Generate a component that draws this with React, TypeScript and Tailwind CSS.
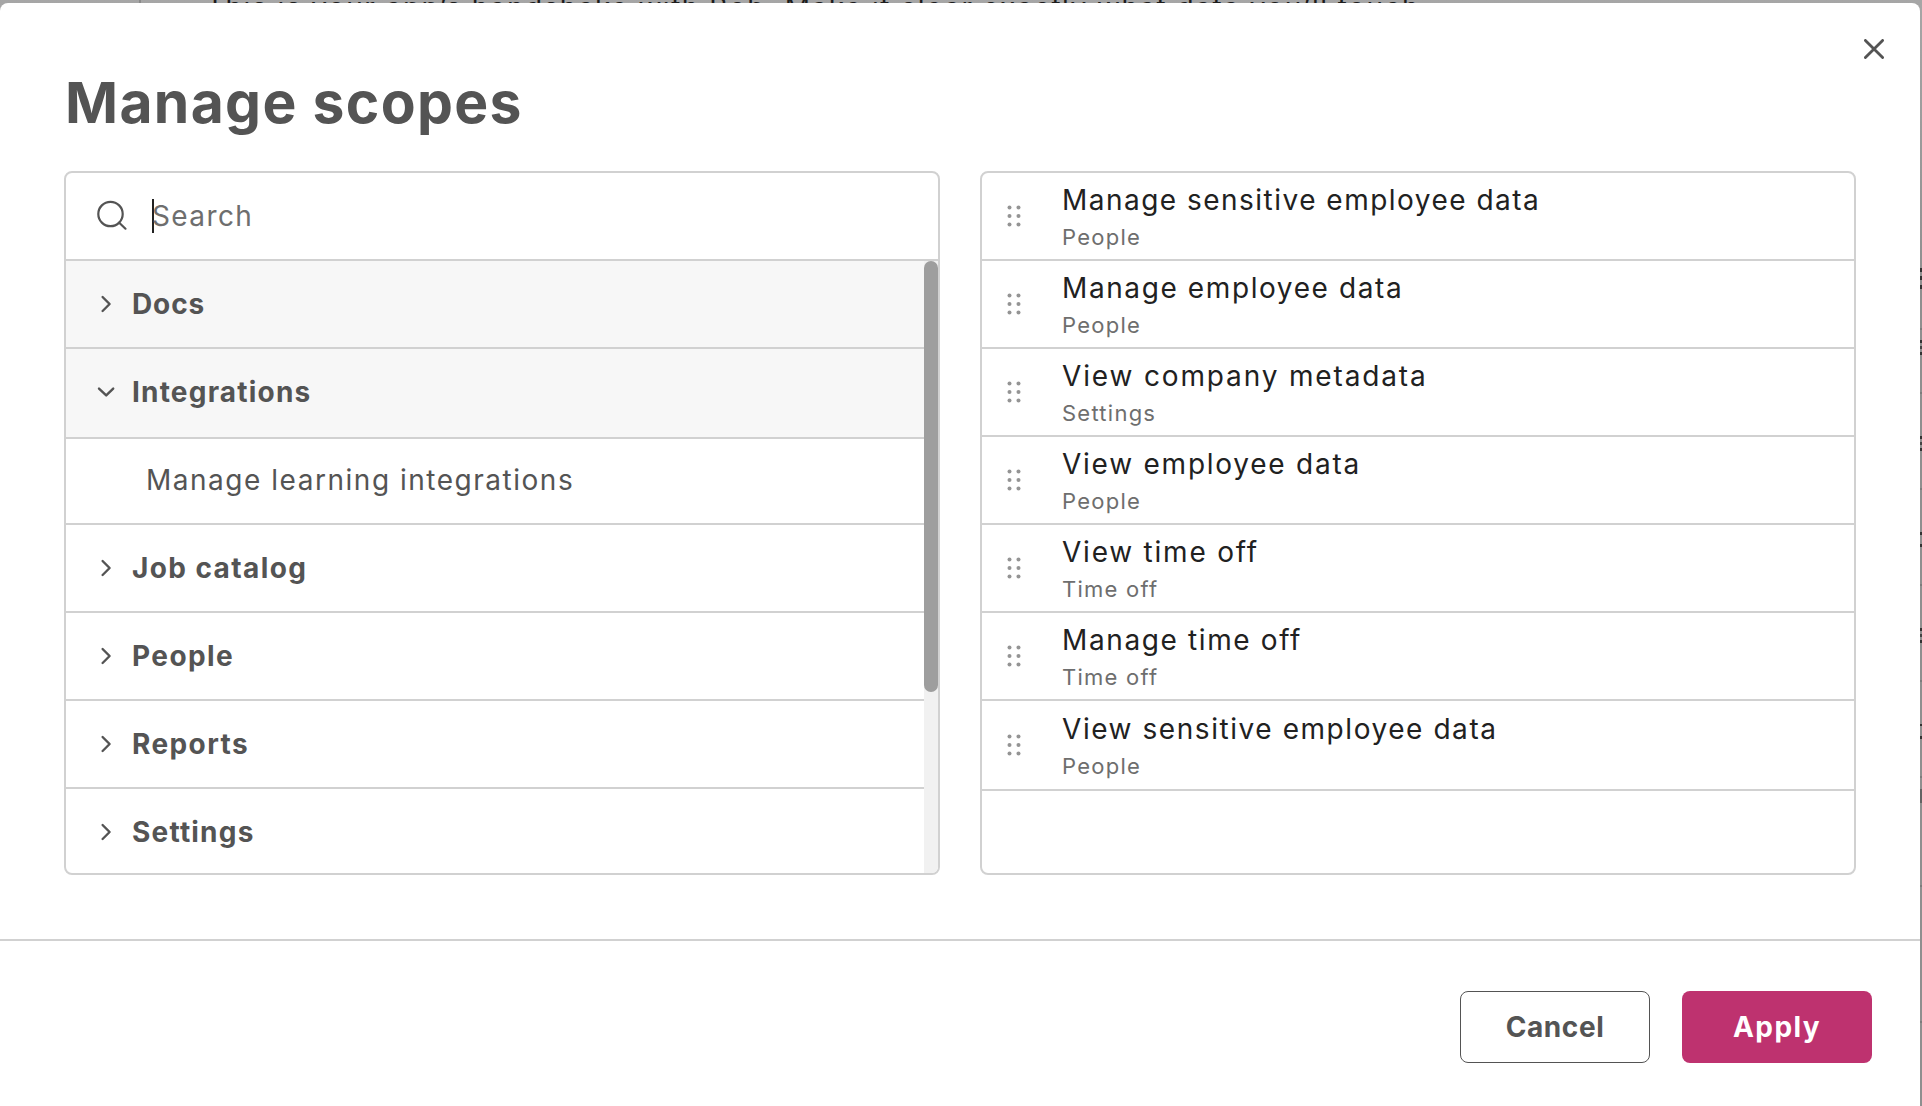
import { useState } from "react";

interface Group {
  name: string;
  tracking: string;
  open?: boolean;
  shaded?: boolean;
  items?: string[];
}

interface Scope {
  name: string;
  group: string;
  tracking: string;
}

const groups: Group[] = [
  { name: "Docs", tracking: "tracking-[0.9px]", shaded: true },
  {
    name: "Integrations",
    tracking: "tracking-[1.2px]",
    shaded: true,
    open: true,
    items: ["Manage learning integrations"],
  },
  { name: "Job catalog", tracking: "tracking-[1.4px]" },
  { name: "People", tracking: "tracking-[1.4px]" },
  { name: "Reports", tracking: "tracking-[1.4px]" },
  { name: "Settings", tracking: "tracking-[1.2px]" },
];

const scopes: Scope[] = [
  { name: "Manage sensitive employee data", group: "People", tracking: "tracking-[1.48px]" },
  { name: "Manage employee data", group: "People", tracking: "tracking-[1.6px]" },
  { name: "View company metadata", group: "Settings", tracking: "tracking-[1.85px]" },
  { name: "View employee data", group: "People", tracking: "tracking-[1.76px]" },
  { name: "View time off", group: "Time off", tracking: "tracking-[1.78px]" },
  { name: "Manage time off", group: "Time off", tracking: "tracking-[1.62px]" },
  { name: "View sensitive employee data", group: "People", tracking: "tracking-[1.56px]" },
];

// slivers of the page that stick out to the right of the modal
const slivers = [
  "top-[268px] h-[4px] bg-[#333]",
  "top-[276px] h-[4px] bg-[#333]",
  "top-[285px] h-[4px] bg-[#333]",
  "top-[328px] h-[2px] bg-[#7c7c7c]",
  "top-[340px] h-[3px] bg-[#333]",
  "top-[346px] h-[3px] bg-[#444]",
  "top-[352px] h-[3px] bg-[#333]",
  "top-[392px] h-[2px] bg-[#7c7c7c]",
  "top-[436px] h-[3px] bg-[#333]",
  "top-[442px] h-[3px] bg-[#444]",
  "top-[448px] h-[3px] bg-[#333]",
  "top-[488px] h-[2px] bg-[#7c7c7c]",
  "top-[532px] h-[3px] bg-[#333]",
  "top-[544px] h-[3px] bg-[#333]",
  "top-[584px] h-[2px] bg-[#7c7c7c]",
  "top-[628px] h-[3px] bg-[#333]",
  "top-[634px] h-[3px] bg-[#444]",
  "top-[640px] h-[3px] bg-[#333]",
  "top-[680px] h-[2px] bg-[#7c7c7c]",
  "top-[724px] h-[2px] bg-[#333]",
  "top-[736px] h-[3px] bg-[#333]",
  "top-[776px] h-[2px] bg-[#7c7c7c]",
  "top-[789px] h-[14px] bg-[#636363]",
  "top-[885px] h-[2px] bg-[#7c7c7c]",
  "top-[1021px] h-[2px] bg-[#7c7c7c]",
];

function SearchIcon() {
  return (
    <svg width="32" height="32" viewBox="0 0 32 32" fill="none" stroke="#545454" strokeWidth="2.2" strokeLinecap="round">
      <circle cx="14.5" cy="14" r="12.2" />
      <path d="M23.2 22.7 29.5 28.7" />
    </svg>
  );
}

function Chevron({ open }: { open?: boolean }) {
  return (
    <svg
      width="20"
      height="20"
      viewBox="0 0 20 20"
      fill="none"
      stroke="#545454"
      strokeWidth="2.4"
      strokeLinecap="round"
      strokeLinejoin="round"
    >
      {open ? <path d="M3 6.6 10.2 13.4 17.2 6.6" /> : <path d="M6.6 3 13.6 10 6.6 17" />}
    </svg>
  );
}

function DragHandle() {
  return (
    <svg width="14" height="22" viewBox="0 0 14 22" fill="#949494">
      {[2.5, 11, 19.5].map((y) => (
        <g key={y}>
          <circle cx="2.5" cy={y} r="2" />
          <circle cx="11.5" cy={y} r="2" />
        </g>
      ))}
    </svg>
  );
}

export default function App() {
  const [query, setQuery] = useState("");

  return (
    <div className="relative h-[1106px] w-[1922px] overflow-hidden bg-[#8f8f8f] bg-linear-to-b from-[#a6a6a6] to-[#8f8f8f] to-[280px] pt-[3px] font-[Inter,sans-serif] text-[#545454]">
      {/* page behind the modal */}
      <div className="absolute top-0 left-[139px] h-[3px] w-[2px] bg-[#8a8a8a]" />
      <p className="absolute -top-[9px] left-[206px] text-[28px] leading-[34px] tracking-[1.48px] whitespace-nowrap text-[#1c1c1c]">
        This is your app’s handshake with Bob. Make it clear exactly what data you’ll touch.
      </p>
      {slivers.map((s) => (
        <div key={s} className={`absolute right-0 w-[2px] ${s}`} />
      ))}

      <div className="relative flex h-[1103px] w-[1920px] flex-col rounded-t-[8px] bg-white">
        <button className="absolute top-[36px] right-[36px] text-[#545454]" aria-label="Close">
          <svg width="20" height="20" viewBox="0 0 20 20" stroke="currentColor" strokeWidth="2.8" strokeLinecap="round">
            <path d="M1.4 1.4 18.6 18.6M18.6 1.4 1.4 18.6" />
          </svg>
        </button>

        <h1 className="mt-[64px] ml-[65px] text-[57px] leading-[72px] font-bold tracking-[1.33px]">Manage scopes</h1>

        <div className="mt-8 ml-16 flex gap-10">
          <div className="flex h-[704px] w-[876px] flex-col overflow-hidden rounded-[8px] border-2 border-[#d1d1d1]">
            <div className="flex h-[88px] shrink-0 items-center border-b-2 border-[#d1d1d1] pl-[30px]">
              <SearchIcon />
              <div className="ml-6 h-[34px] w-[2px] bg-[#212121]" />
              <input
                type="text"
                value={query}
                onChange={(e) => setQuery(e.target.value)}
                placeholder="Search"
                className="-ml-[2px] flex-1 text-[28px] tracking-[1.4px] outline-none placeholder:text-[#6e6e6e]"
              />
            </div>

            <div className="flex min-h-0 flex-1">
              <div className="flex-1 overflow-hidden">
                {groups.map((g) => (
                  <div key={g.name}>
                    <div
                      className={`flex items-center border-b-2 border-[#d1d1d1] pl-[30px] ${
                        g.open ? "h-[90px] pb-[2px]" : "h-[88px]"
                      } ${g.shaded ? "bg-[#f7f7f7]" : ""}`}
                    >
                      <Chevron open={g.open} />
                      <span className={`ml-4 text-[28px] font-bold ${g.tracking}`}>{g.name}</span>
                    </div>
                    {g.items?.map((item) => (
                      <div key={item} className="flex h-[86px] items-center border-b-2 border-[#d1d1d1] pb-[2px] pl-20">
                        <span className="text-[28px] tracking-[1.52px]">{item}</span>
                      </div>
                    ))}
                  </div>
                ))}
              </div>
              <div className="w-[14px] bg-[#f1f1f1]">
                <div className="h-[431px] rounded-full bg-[#9e9e9e]" />
              </div>
            </div>
          </div>

          <div className="h-[704px] w-[876px] overflow-hidden rounded-[8px] border-2 border-[#d1d1d1]">
            {scopes.map((s, i) => (
              <div
                key={s.name}
                className={`flex items-center border-b-2 border-[#d1d1d1] pl-[25px] ${
                  i === scopes.length - 1 ? "h-[90px]" : "h-[88px]"
                }`}
              >
                <DragHandle />
                <div className="ml-[41px] pt-px">
                  <p className={`text-[28px] leading-[40px] text-[#212121] ${s.tracking}`}>{s.name}</p>
                  <p className="mt-px text-[22px] leading-[32px] tracking-[1.25px] text-[#6e6e6e]">{s.group}</p>
                </div>
              </div>
            ))}
          </div>
        </div>

        <div className="mt-16 flex justify-end gap-8 border-t-2 border-[#d1d1d1] pt-[50px] pr-12">
          <button className="h-[72px] w-[190px] rounded-[8px] border border-[#545454] text-[28px] font-bold tracking-[0.6px]">
            Cancel
          </button>
          <button className="h-[72px] w-[190px] rounded-[8px] bg-[#be326f] text-[28px] font-bold tracking-[1.4px] text-white">
            Apply
          </button>
        </div>
      </div>
    </div>
  );
}
